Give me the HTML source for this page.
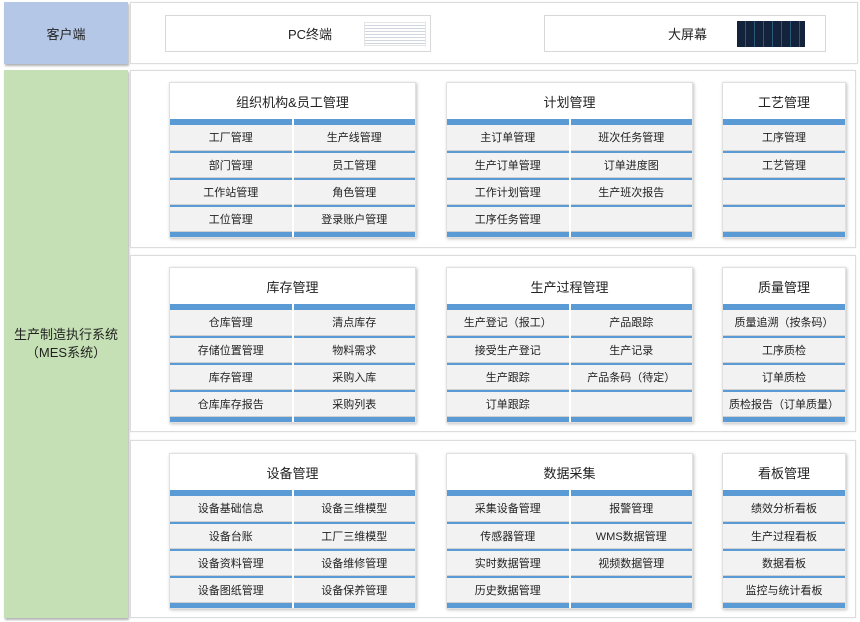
<!DOCTYPE html>
<html><head><meta charset="utf-8"><style>
*{margin:0;padding:0;box-sizing:border-box}
body{width:860px;height:622px;background:#fff;font-family:"Liberation Sans","Noto Sans CJK SC",sans-serif;position:relative;overflow:hidden;color:#222}
.abs{position:absolute}
.lab{display:flex;align-items:center;justify-content:center;text-align:center;font-size:13px;box-shadow:1px 2px 2px rgba(0,0,0,.3)}
.panel{border:1px solid #dcdcdc;box-shadow:0 0 2px rgba(0,0,0,.08);background:#fff}
.box{border:1px solid #d8d8d8;background:#fff;display:flex;align-items:center;font-size:13px}
.mod{box-shadow:1px 1px 3px rgba(0,0,0,.25);background:#fff;border:1px solid #e0e0e0}
.mt{height:36px;display:flex;align-items:center;justify-content:center;font-size:13px}
.grid{display:grid;gap:0 2px;background:#fff}
.bar{height:6px;background:#5b9bd5}
.bb{height:5px;background:#5b9bd5}
.c{height:27px;background:#f2f2f2;border-top:2px solid #5b9bd5;display:flex;align-items:center;justify-content:center;font-size:11px;box-shadow:inset 0 -1px 0 #d0d0d0;padding-bottom:2px}
.c.f{border-top:none;height:26px}
</style></head><body>
<div class="abs lab" style="left:4px;top:2px;width:124px;height:62px;background:#b4c7e7">客户端</div>
<div class="abs panel" style="left:130px;top:2px;width:728px;height:62px"></div>
<div class="abs box" style="left:165px;top:15px;width:266px;height:37px"><span style="margin-left:122px">PC终端</span>
<div style="margin-left:32px;width:62px;height:24px;background:#f4f6f8;border:1px solid #e4e4e4;background-image:repeating-linear-gradient(#fff 0 2px,#cfd6df 2px 3px)"></div></div>
<div class="abs box" style="left:544px;top:15px;width:282px;height:37px"><span style="margin-left:123px">大屏幕</span>
<div style="margin-left:30px;width:68px;height:26px;background:#13233c;background-image:repeating-linear-gradient(90deg,#13233c 0 8px,#2a5a7a 8px 9px)"></div></div>
<div class="abs lab" style="left:4px;top:70px;width:124px;height:548px;background:#c5e0b4;line-height:18px">生产制造执行系统<br>（MES系统）</div>
<div class="abs panel" style="left:130px;top:70px;width:726px;height:178px"></div>
<div class="abs panel" style="left:130px;top:255px;width:726px;height:177px"></div>
<div class="abs panel" style="left:130px;top:440px;width:726px;height:178px"></div>
<div id="m"></div>
<script>
var rows=[82,267,453];
var mods=[
[["组织机构&员工管理",["工厂管理","生产线管理","部门管理","员工管理","工作站管理","角色管理","工位管理","登录账户管理"]],
 ["计划管理",["主订单管理","班次任务管理","生产订单管理","订单进度图","工作计划管理","生产班次报告","工序任务管理",""]],
 ["工艺管理",["工序管理","工艺管理","",""]]],
[["库存管理",["仓库管理","清点库存","存储位置管理","物料需求","库存管理","采购入库","仓库库存报告","采购列表"]],
 ["生产过程管理",["生产登记（报工）","产品跟踪","接受生产登记","生产记录","生产跟踪","产品条码（待定）","订单跟踪",""]],
 ["质量管理",["质量追溯（按条码）","工序质检","订单质检","质检报告（订单质量）"]]],
[["设备管理",["设备基础信息","设备三维模型","设备台账","工厂三维模型","设备资料管理","设备维修管理","设备图纸管理","设备保养管理"]],
 ["数据采集",["采集设备管理","报警管理","传感器管理","WMS数据管理","实时数据管理","视频数据管理","历史数据管理",""]],
 ["看板管理",["绩效分析看板","生产过程看板","数据看板","监控与统计看板"]]]];
var xs=[[169,247],[446,247],[722,124]];
var h="";
for(var r=0;r<3;r++)for(var k=0;k<3;k++){
 var m=mods[r][k],two=m[1].length==8,w=xs[k][1];
 h+='<div class="abs mod" style="left:'+xs[k][0]+'px;top:'+rows[r]+'px;width:'+w+'px"><div class="mt">'+m[0]+'</div>';
 h+='<div class="grid" style="grid-template-columns:'+(two?'1fr 1fr':'1fr')+'">';
 var n=two?2:1;
 for(var i=0;i<n;i++)h+='<div class="bar"></div>';
 m[1].forEach(function(t,i){h+='<div class="c'+(i<n?' f':'')+'">'+t+'</div>';});
 for(var i=0;i<n;i++)h+='<div class="bb"></div>';
 h+='</div></div>';
}
document.getElementById("m").innerHTML=h;
</script>
</body></html>
